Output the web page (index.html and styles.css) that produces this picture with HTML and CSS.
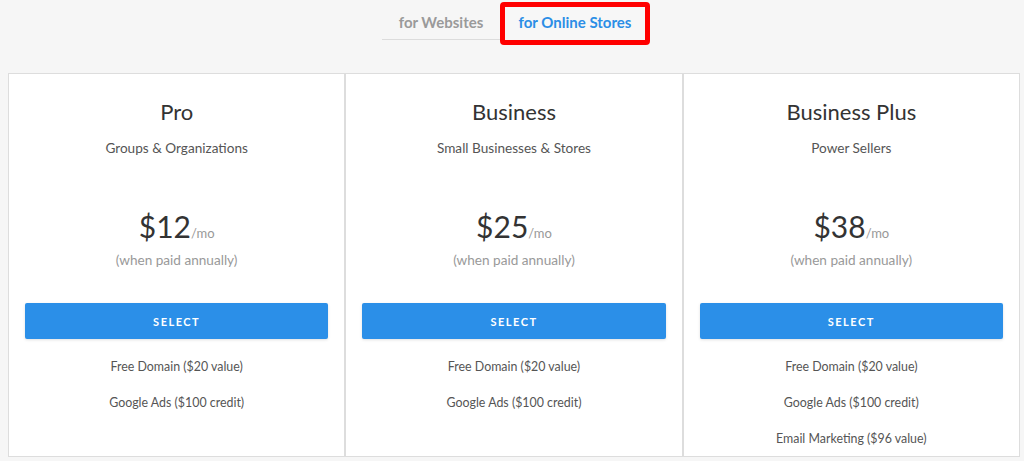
FILE: index.html
```html
<!DOCTYPE html>
<html>
<head>
<meta charset="utf-8">
<link rel="stylesheet" href="styles.css">
</head>
<body>
<div class="tabs">
  <div class="tab">for Websites</div>
  <div class="tab active">for Online Stores</div>
</div>
<div class="plans">
  <div class="plan">
    <h2 class="plan-name">Pro</h2>
    <p class="plan-sub">Groups &amp; Organizations</p>
    <div class="price"><span class="amount">$12</span><span class="per">/mo</span></div>
    <p class="note">(when paid annually)</p>
    <button class="select">SELECT</button>
    <ul class="features">
      <li>Free Domain ($20 value)</li>
      <li>Google Ads ($100 credit)</li>
    </ul>
  </div>
  <div class="plan">
    <h2 class="plan-name">Business</h2>
    <p class="plan-sub">Small Businesses &amp; Stores</p>
    <div class="price"><span class="amount">$25</span><span class="per">/mo</span></div>
    <p class="note">(when paid annually)</p>
    <button class="select">SELECT</button>
    <ul class="features">
      <li>Free Domain ($20 value)</li>
      <li>Google Ads ($100 credit)</li>
    </ul>
  </div>
  <div class="plan">
    <h2 class="plan-name">Business Plus</h2>
    <p class="plan-sub">Power Sellers</p>
    <div class="price"><span class="amount">$38</span><span class="per">/mo</span></div>
    <p class="note">(when paid annually)</p>
    <button class="select">SELECT</button>
    <ul class="features">
      <li>Free Domain ($20 value)</li>
      <li>Google Ads ($100 credit)</li>
      <li>Email Marketing ($96 value)</li>
    </ul>
  </div>
</div>
</body>
</html>
```
FILE: styles.css
```css
html, body {
  margin: 0;
  padding: 0;
  background: #f6f6f6;
  font-family: Lato, "Open Sans", sans-serif;
  color: #333;
}
.tabs {
  display: flex;
  justify-content: center;
  padding-top: 2px;
  padding-left: 8px;
  height: 73px;
  box-sizing: border-box;
}
.tab {
  font-size: 15px;
  font-weight: 700;
  color: #9a9a9a;
  box-sizing: border-box;
}
.tab:first-child {
  width: 118px;
  height: 38px;
  border-bottom: 1px solid #dcdcdc;
  text-align: center;
  line-height: 40px;
}
.tab.active {
  width: 150px;
  height: 43px;
  color: #2b8ee6;
  border: 5px solid #ff0000;
  border-radius: 4px;
  text-align: center;
  line-height: 31px;
  background: #f7f7f7;
}
.plans {
  display: grid;
  grid-template-columns: repeat(3, 1fr);
  margin: 0 4px 0 8px;
}
.plan {
  background: #fff;
  border: 1px solid #dddddd;
  height: 384px;
  box-sizing: border-box;
  padding: 25px 16px 0;
  text-align: center;
}
.plan-name {
  margin: 0;
  font-size: 22px;
  font-weight: 400;
  line-height: 26px;
  color: #333;
}
.plan-sub {
  margin: 14px 0 0;
  font-size: 13.6px;
  line-height: 18px;
  color: #555;
}
.price {
  margin-top: 51px;
  line-height: 36px;
  height: 36px;
}
.amount {
  font-size: 30px;
  color: #333;
}
.per {
  font-size: 13px;
  color: #999;
}
.note {
  margin: 7px 0 0;
  font-size: 13.6px;
  line-height: 18px;
  color: #999;
}
.select {
  display: block;
  width: 100%;
  height: 36px;
  margin-top: 34px;
  border: none;
  border-radius: 2px;
  background: #2b8fe8;
  color: #fff;
  font-family: Lato, "Open Sans", sans-serif;
  font-size: 11px;
  font-weight: 700;
  letter-spacing: 1.5px;
  box-shadow: 0 1px 3px rgba(0,0,0,0.12);
}
.features {
  list-style: none;
  margin: 10px 0 0;
  padding: 0;
}
.features li {
  font-size: 12.4px;
  line-height: 36px;
  color: #555;
}
```
